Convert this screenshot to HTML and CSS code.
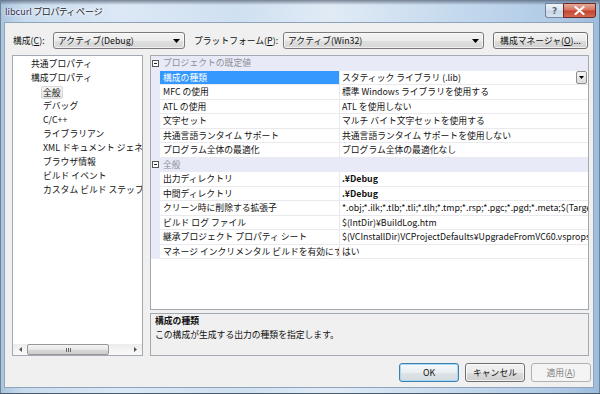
FILE: index.html
```html
<!DOCTYPE html>
<html lang="ja">
<head>
    <meta charset="UTF-8">
    <title>libcurl プロパティ ページ</title>
    <link rel="stylesheet" href="styles.css">
</head>
<body>
    <div class="window">
        <div class="titlebar">
            <span class="title"><span class="app">libcurl</span> プロパティ ページ</span>
            <div class="caption">
                <div class="cap help">?</div>
                <div class="cap close">
                    <svg width="11" height="9" viewBox="0 0 11 9"><path d="M1.5 1 L9.5 8 M9.5 1 L1.5 8" stroke="#fff" stroke-width="2.2" stroke-linecap="round"/></svg>
                </div>
            </div>
        </div>
        <div class="client">
            <div class="toolbar">
                <label class="lbl lbl-config">構成(<u>C</u>):</label>
                <div class="combo combo-config">
                    <span>アクティブ(Debug)</span>
                    <svg class="arrow" width="7" height="4" viewBox="0 0 7 4"><path d="M0 0 H7 L3.5 4 Z" fill="#000"/></svg>
                </div>
                <label class="lbl lbl-platform">プラットフォーム(<u>P</u>):</label>
                <div class="combo combo-platform">
                    <span>アクティブ(Win32)</span>
                    <svg class="arrow" width="7" height="4" viewBox="0 0 7 4"><path d="M0 0 H7 L3.5 4 Z" fill="#000"/></svg>
                </div>
                <div class="btn btn-manager">構成マネージャ(<u>O</u>)...</div>
            </div>

            <div class="main">
                <div class="tree">
                    <div class="tree-items">
                        <div class="item lv1">共通プロパティ</div>
                        <div class="item lv1">構成プロパティ</div>
                        <div class="item lv2"><span class="sel">全般</span></div>
                        <div class="item lv2">デバッグ</div>
                        <div class="item lv2">C/C++</div>
                        <div class="item lv2">ライブラリアン</div>
                        <div class="item lv2">XML ドキュメント ジェネレータ</div>
                        <div class="item lv2">ブラウザ情報</div>
                        <div class="item lv2">ビルド イベント</div>
                        <div class="item lv2">カスタム ビルド ステップ</div>
                    </div>
                    <div class="hscroll">
                        <div class="sb-arrow">
                            <svg width="3" height="5" viewBox="0 0 3 5"><path d="M3 0 V5 L0 2.5 Z" fill="#555"/></svg>
                        </div>
                        <div class="thumb"><span class="grip"></span></div>
                        <div class="sb-track"></div>
                        <div class="sb-arrow">
                            <svg width="3" height="5" viewBox="0 0 3 5"><path d="M0 0 V5 L3 2.5 Z" fill="#555"/></svg>
                        </div>
                    </div>
                </div>

                <div class="right">
                    <div class="grid">
                        <div class="row cat">
                            <div class="gutter"><svg width="7" height="7" viewBox="0 0 7 7"><rect x="0.5" y="0.5" width="6" height="6" fill="#fff" stroke="#555"/><path d="M2 3.5 H5" stroke="#222"/></svg></div>
                            <div class="cat-name">プロジェクトの既定値</div>
                        </div>
                        <div class="row selected">
                            <div class="gutter"></div>
                            <div class="name">構成の種類</div>
                            <div class="value">スタティック ライブラリ (.lib)
                                <div class="dd"><svg width="5" height="3" viewBox="0 0 5 3"><path d="M0 0 H5 L2.5 3 Z" fill="#000"/></svg></div>
                            </div>
                        </div>
                        <div class="row">
                            <div class="gutter"></div>
                            <div class="name">MFC の使用</div>
                            <div class="value">標準 Windows ライブラリを使用する</div>
                        </div>
                        <div class="row">
                            <div class="gutter"></div>
                            <div class="name">ATL の使用</div>
                            <div class="value">ATL を使用しない</div>
                        </div>
                        <div class="row">
                            <div class="gutter"></div>
                            <div class="name">文字セット</div>
                            <div class="value">マルチ バイト文字セットを使用する</div>
                        </div>
                        <div class="row">
                            <div class="gutter"></div>
                            <div class="name">共通言語ランタイム サポート</div>
                            <div class="value">共通言語ランタイム サポートを使用しない</div>
                        </div>
                        <div class="row">
                            <div class="gutter"></div>
                            <div class="name">プログラム全体の最適化</div>
                            <div class="value">プログラム全体の最適化なし</div>
                        </div>
                        <div class="row cat">
                            <div class="gutter"><svg width="7" height="7" viewBox="0 0 7 7"><rect x="0.5" y="0.5" width="6" height="6" fill="#fff" stroke="#555"/><path d="M2 3.5 H5" stroke="#222"/></svg></div>
                            <div class="cat-name">全般</div>
                        </div>
                        <div class="row">
                            <div class="gutter"></div>
                            <div class="name">出力ディレクトリ</div>
                            <div class="value bold">.¥Debug</div>
                        </div>
                        <div class="row">
                            <div class="gutter"></div>
                            <div class="name">中間ディレクトリ</div>
                            <div class="value bold">.¥Debug</div>
                        </div>
                        <div class="row">
                            <div class="gutter"></div>
                            <div class="name">クリーン時に削除する拡張子</div>
                            <div class="value">*.obj;*.ilk;*.tlb;*.tli;*.tlh;*.tmp;*.rsp;*.pgc;*.pgd;*.meta;$(TargetPath)</div>
                        </div>
                        <div class="row">
                            <div class="gutter"></div>
                            <div class="name">ビルド ログ ファイル</div>
                            <div class="value">$(IntDir)¥BuildLog.htm</div>
                        </div>
                        <div class="row">
                            <div class="gutter"></div>
                            <div class="name">継承プロジェクト プロパティ シート</div>
                            <div class="value">$(VCInstallDir)VCProjectDefaults¥UpgradeFromVC60.vsprops</div>
                        </div>
                        <div class="row">
                            <div class="gutter"></div>
                            <div class="name">マネージ インクリメンタル ビルドを有効にする</div>
                            <div class="value">はい</div>
                        </div>
                    </div>
                    <div class="desc">
                        <div class="desc-title">構成の種類</div>
                        <div class="desc-text">この構成が生成する出力の種類を指定します。</div>
                    </div>
                </div>
            </div>

            <div class="footer">
                <div class="btn btn-default">OK</div>
                <div class="btn">キャンセル</div>
                <div class="btn btn-disabled">適用(<u>A</u>)</div>
            </div>
        </div>
    </div>
</body>
</html>
```

FILE: styles.css
```css
*{
    margin: 0;
    padding: 0;
    box-sizing: border-box;
}
body{
    width: 600px;
    height: 394px;
    overflow: hidden;
    font-family: "Noto Sans CJK JP", "Noto Sans", sans-serif;
    font-size: 8.8px;
    color: #111;
}
u{
    text-decoration: underline;
    text-underline-offset: 1px;
}

/* window frame (aero glass) */
.window{
    width: 600px;
    height: 394px;
    display: flex;
    flex-direction: column;
    background:
        linear-gradient(180deg, rgba(40,50,70,.55) 0, rgba(60,70,90,.25) 3px, rgba(255,255,255,0) 5px),
        linear-gradient(90deg, #a9c3de 0%, #c8dcef 4%, #dce8f5 20%, #cfe0f1 40%, #e1ebf6 55%, #c6daee 75%, #b1cbe6 92%, #9dbcdc 100%);
    box-shadow: inset 0 -1px 0 #4a5b6e, inset 1px 0 0 #6f8396, inset -1px 0 0 #6f8396;
}
.titlebar{
    height: 22px;
    display: flex;
    align-items: center;
    padding-left: 5px;
}
.title{
    font-size: 9px;
    font-feature-settings: "palt";
    color: #1c1c24;
    text-shadow: 0 0 4px #fff, 0 0 2px #fff;
}
.title .app{
    color: #3a2c52;
}
.caption{
    margin-left: auto;
    margin-right: 4px;
    align-self: flex-start;
    margin-top: 3px;
    display: flex;
}
.cap{
    height: 15px;
    display: flex;
    align-items: center;
    justify-content: center;
}
.help{
    width: 18px;
    border: 1px solid rgba(70,90,120,.7);
    border-right: none;
    border-radius: 0 0 0 3px;
    background: linear-gradient(180deg, #eef3f8 0%, #dbe5ef 45%, #c9d7e6 55%, #d7e3ef 100%);
    color: #5c6b7c;
    font-family: "DejaVu Sans", sans-serif;
    font-size: 9px;
    font-weight: bold;
}
.close{
    width: 33px;
    border: 1px solid #6b2a22;
    border-radius: 0 0 3px 0;
    background: linear-gradient(180deg, #e8a99c 0%, #d6735f 45%, #c4452f 55%, #d36b52 100%);
}

/* client area */
.client{
    flex: 1;
    margin: 0 6px 6px 4px;
    background: #f0f0f0;
    border: 1px solid #8fa3b9;
    padding: 9px 4px 0 7px;
    display: flex;
    flex-direction: column;
}
.toolbar{
    display: flex;
    align-items: center;
    height: 17px;
}
.lbl{
    padding-left: 1px;
    white-space: nowrap;
}
.lbl-config{
    width: 41px;
}
.lbl-platform{
    width: 90px;
    margin-left: 8px;
}
.combo{
    height: 17px;
    display: flex;
    align-items: center;
    padding: 0 4px;
    border: 1px solid #7a7a7a;
    border-radius: 3px;
    background: linear-gradient(180deg, #f4f4f4 0%, #ececec 50%, #dfdfdf 51%, #d6d6d6 100%);
    box-shadow: inset 0 0 0 1px rgba(255,255,255,.6);
}
.combo .arrow{
    margin-left: auto;
}
.combo-config{
    width: 132px;
}
.combo-platform{
    width: 201px;
}
.btn{
    height: 17px;
    display: flex;
    align-items: center;
    justify-content: center;
    border: 1px solid #707070;
    border-radius: 3px;
    background: linear-gradient(180deg, #f2f2f2 0%, #ebebeb 50%, #dddddd 51%, #cfcfcf 100%);
    box-shadow: inset 0 0 0 1px rgba(255,255,255,.7);
    white-space: nowrap;
}
.btn-manager{
    width: 95px;
    margin-left: 9px;
}

.main{
    display: flex;
    gap: 7px;
    margin-top: 6px;
    height: 301px;
}

/* tree */
.tree{
    width: 131px;
    border: 1px solid #a3a9b1;
    background: #fff;
    display: flex;
    flex-direction: column;
    overflow: hidden;
}
.tree-items{
    flex: 1;
    padding-top: 1px;
}
.item{
    height: 14px;
    line-height: 14px;
    white-space: nowrap;
    overflow: hidden;
}
.item.lv1{
    padding-left: 18px;
}
.item.lv2{
    padding-left: 30px;
}
.sel{
    display: inline-block;
    margin-left: -2px;
    padding: 0 1px;
    line-height: 11px;
    border: 1px solid #d9d9d9;
    border-radius: 2px;
    background: linear-gradient(180deg, #f4f4f4, #e4e4e4);
    vertical-align: middle;
}
.hscroll{
    height: 11px;
    display: flex;
    align-items: stretch;
    background: linear-gradient(180deg, #ececec, #fafafa);
}
.sb-arrow{
    width: 14px;
    display: flex;
    align-items: center;
    justify-content: center;
}
.thumb{
    width: 82px;
    border: 1px solid #979797;
    border-radius: 2px;
    background: linear-gradient(180deg, #f4f4f4 0%, #e8e8e8 50%, #d8d8d8 51%, #cfcfcf 100%);
    display: flex;
    align-items: center;
    justify-content: center;
}
.grip{
    width: 5px;
    height: 4px;
    background: repeating-linear-gradient(90deg, #666 0 1px, transparent 1px 2px);
}
.sb-track{
    flex: 1;
}

/* property grid */
.right{
    width: 439px;
    display: flex;
    flex-direction: column;
    gap: 3px;
}
.grid{
    height: 255px;
    border: 1px solid #a3a9b1;
    background: #fff;
    overflow: hidden;
}
.row{
    height: 14.5px;
    display: flex;
    line-height: 13.5px;
    white-space: nowrap;
}
.gutter{
    width: 9px;
    flex: none;
    background: #e8eaf7;
    display: flex;
    align-items: center;
    padding-left: 1px;
}
.row.cat{
    background: #e8eaf7;
}
.cat-name{
    padding-left: 3px;
    color: #8e8e96;
}
.name{
    width: 180px;
    flex: none;
    padding-left: 3px;
    overflow: hidden;
    border-right: 1px solid #e9e9ee;
    border-bottom: 1px solid #e9e9ee;
}
.value{
    flex: 1;
    display: flex;
    padding-left: 2px;
    overflow: hidden;
    border-bottom: 1px solid #e9e9ee;
}
.value.bold{
    font-weight: bold;
}
.row.selected .name{
    background: #3399ff;
    color: #fff;
}
.dd{
    margin-left: auto;
    margin-right: 1px;
    width: 11px;
    height: 13px;
    border: 1px solid #8f8f8f;
    border-radius: 2px;
    background: linear-gradient(180deg, #f6f6f6, #dcdcdc);
    display: flex;
    align-items: center;
    justify-content: center;
}

.desc{
    height: 43px;
    border: 1px solid #a3a9b1;
    background: #f0f0f0;
    padding: 0 4px;
    line-height: 14px;
}
.desc-title{
    font-weight: bold;
}

.footer{
    display: flex;
    justify-content: flex-end;
    gap: 6px;
    margin-top: 7px;
    margin-right: -2px;
}
.footer .btn{
    width: 60px;
    height: 19px;
}
.btn-default{
    border-color: #3c7fb1;
    background: linear-gradient(180deg, #f5f9fb 0%, #e9eef1 50%, #dde4e8 51%, #d3dce1 100%);
    box-shadow: inset 0 0 0 1px #a8d8f3;
}
.btn-disabled{
    border-color: #adb2b5;
    background: #f4f4f4;
    box-shadow: none;
    color: #838383;
}
```
